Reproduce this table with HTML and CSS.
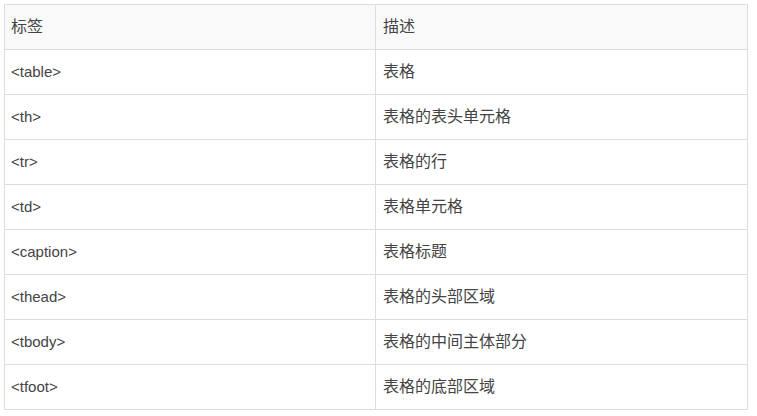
FILE: index.html
```html
<!DOCTYPE html>
<html lang="zh">
<head>
<meta charset="utf-8">
<link rel="stylesheet" href="styles.css">
</head>
<body>
<table class="tags">
  <thead>
    <tr><th class="c1">标签</th><th>描述</th></tr>
  </thead>
  <tbody>
    <tr><td>&lt;table&gt;</td><td>表格</td></tr>
    <tr><td>&lt;th&gt;</td><td>表格的表头单元格</td></tr>
    <tr><td>&lt;tr&gt;</td><td>表格的行</td></tr>
    <tr><td>&lt;td&gt;</td><td>表格单元格</td></tr>
    <tr><td>&lt;caption&gt;</td><td>表格标题</td></tr>
    <tr><td>&lt;thead&gt;</td><td>表格的头部区域</td></tr>
    <tr><td>&lt;tbody&gt;</td><td>表格的中间主体部分</td></tr>
    <tr><td>&lt;tfoot&gt;</td><td>表格的底部区域</td></tr>
  </tbody>
</table>
</body>
</html>
```
FILE: styles.css
```css
html, body {
  margin: 0;
  background: #fff;
}
body {
  padding: 4px;
  font-family: "Liberation Sans", "Noto Sans CJK SC", sans-serif;
  font-size: 15px;
  color: #444;
}
.tags {
  width: 744px;
  border-collapse: collapse;
  table-layout: fixed;
}
.tags th, .tags td {
  border: 1px solid #ddd;
  height: 45px;
  padding: 0 7px 0 6px;
  text-align: left;
  font-weight: normal;
  vertical-align: middle;
  line-height: 20px;
  box-sizing: border-box;
}
.tags th {
  background: #f9f9f9;
  font-size: 16px;
}
.tags td + td, .tags th + th {
  padding-left: 7px;
  font-size: 16px;
}
.tags .c1 {
  width: 371px;
}
```
